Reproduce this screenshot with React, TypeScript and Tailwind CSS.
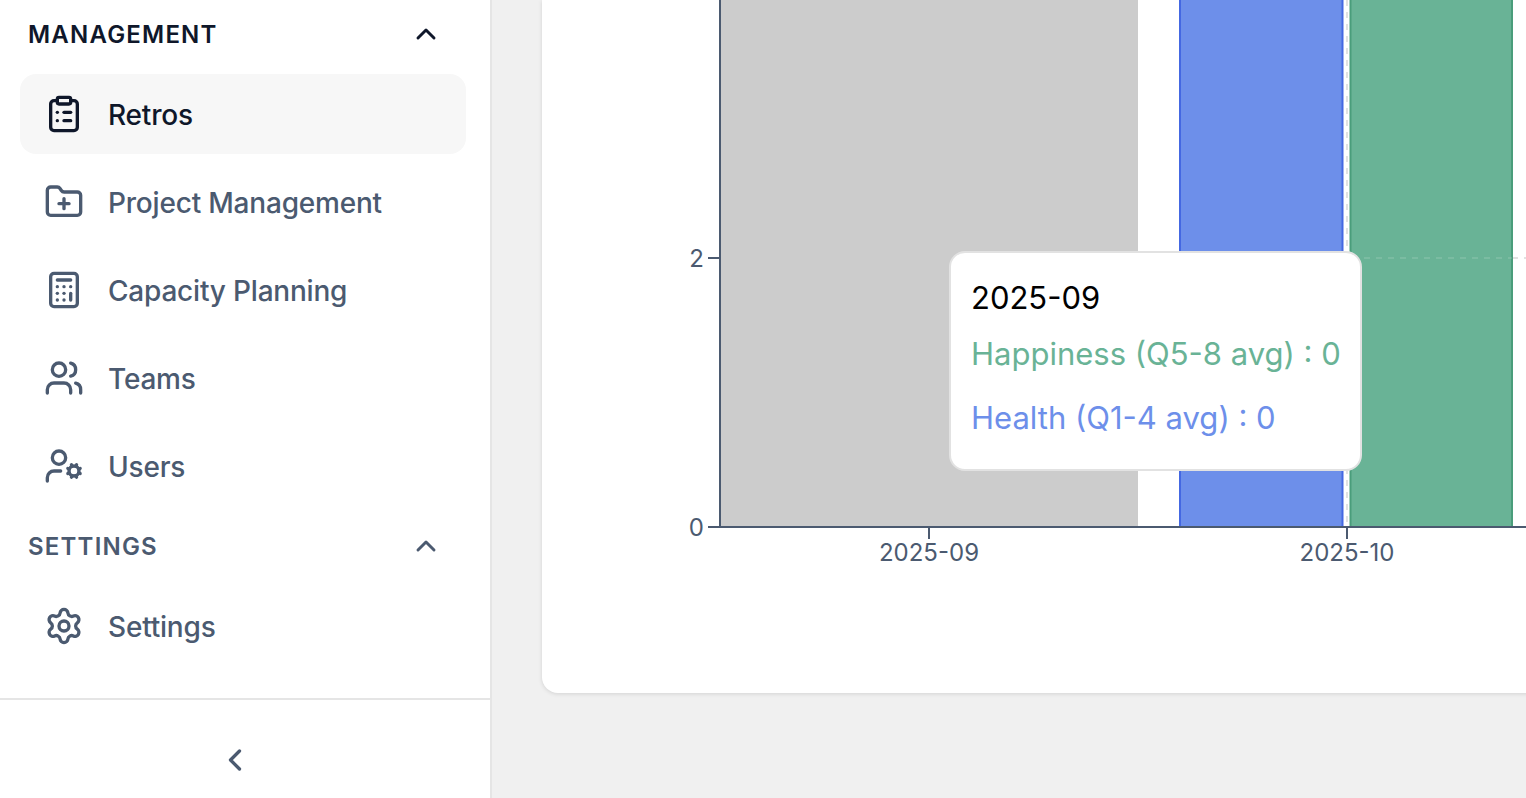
import {
  Calculator,
  ChevronLeft,
  ChevronUp,
  ClipboardList,
  FolderPlus,
  Settings,
  UserCog,
  Users,
} from "lucide-react";
import type { LucideIcon } from "lucide-react";

const FONT = "font-['Inter',sans-serif]";

type NavItem = {
  label: string;
  icon: LucideIcon;
  active?: boolean;
};

const MANAGEMENT_ITEMS: NavItem[] = [
  { label: "Retros", icon: ClipboardList, active: true },
  { label: "Project Management", icon: FolderPlus },
  { label: "Capacity Planning", icon: Calculator },
  { label: "Teams", icon: Users },
  { label: "Users", icon: UserCog },
];

function NavRow({ label, icon: Icon, active }: NavItem) {
  return (
    <a
      className={
        active
          ? "flex h-20 items-center gap-6 rounded-2xl bg-[#f7f7f7] pl-6 text-[#0f172a]"
          : "flex h-20 items-center gap-6 rounded-2xl pl-6 text-[#4b5a70]"
      }
    >
      <Icon size={40} strokeWidth={2} />
      <span className="pt-0.5 text-[28px] font-medium tracking-[-0.2px]">{label}</span>
    </a>
  );
}

function SectionHeader({ title, dark }: { title: string; dark?: boolean }) {
  return (
    <div
      className={
        dark
          ? "flex items-center justify-between pl-2 pr-6 text-[#0f172a]"
          : "flex items-center justify-between pl-2 pr-6 text-[#4b5a70]"
      }
    >
      <span className="pt-0.5 text-2xl font-semibold tracking-[1.2px]">{title}</span>
      <ChevronUp size={32} strokeWidth={2.2} />
    </div>
  );
}

function Sidebar() {
  return (
    <aside className="flex h-screen w-[492px] shrink-0 flex-col border-r-2 border-[#e5e5e5] bg-white">
      <nav className="flex-1 pl-5 pr-6">
        <div className="flex h-[68px] items-center">
          <div className="w-full">
            <SectionHeader title="MANAGEMENT" dark />
          </div>
        </div>
        <div className="mt-1.5 flex flex-col gap-2">
          {MANAGEMENT_ITEMS.map((item) => (
            <NavRow key={item.label} {...item} />
          ))}
        </div>
        <div className="flex h-20 items-center">
          <div className="w-full">
            <SectionHeader title="SETTINGS" />
          </div>
        </div>
        <NavRow label="Settings" icon={Settings} />
      </nav>
      <div className="flex h-[100px] justify-center border-t-2 border-[#e5e5e5] pt-[42px] pr-[20px] text-[#4b5a70]">
        <ChevronLeft size={36} strokeWidth={2.2} />
      </div>
    </aside>
  );
}

function Chart() {
  return (
    <svg viewBox="542 0 984 693" className="h-[693px] w-[984px]">
      <line x1={720} y1={258} x2={1526} y2={258} stroke="#e2e2e2" strokeWidth={2} strokeDasharray="6 6" />
      <line x1={1347} y1={0} x2={1347} y2={527} stroke="#e2e2e2" strokeWidth={2} strokeDasharray="6 6" />
      <rect x={721} y={0} width={417} height={527} fill="#cccccc" />
      <rect x={1180} y={-4} width={162.5} height={531} fill="#6d8fea" stroke="#4468e2" strokeWidth={2} />
      <rect x={1350.5} y={-4} width={161.5} height={531} fill="#69b396" stroke="#4a9d7b" strokeWidth={2} />
      <line x1={1352} y1={258} x2={1512} y2={258} stroke="#ffffff" strokeOpacity={0.12} strokeWidth={2} strokeDasharray="6 6" />
      <line x1={720} y1={0} x2={720} y2={528} stroke="#4b5a70" strokeWidth={2} />
      <line x1={708} y1={527} x2={1526} y2={527} stroke="#4b5a70" strokeWidth={2} />
      <line x1={708} y1={258} x2={720} y2={258} stroke="#4b5a70" strokeWidth={2} />
      <line x1={929} y1={527} x2={929} y2={539} stroke="#4b5a70" strokeWidth={2} />
      <line x1={1347} y1={527} x2={1347} y2={539} stroke="#4b5a70" strokeWidth={2} />
      <g fill="#4b5a70" fontSize={24} fontFamily="Inter, sans-serif">
        <text x={704} y={267} textAnchor="end">2</text>
        <text x={704} y={536} textAnchor="end">0</text>
        <text x={929} y={561} textAnchor="middle">2025-09</text>
        <text x={1347} y={561} textAnchor="middle">2025-10</text>
      </g>
    </svg>
  );
}

function ChartTooltip() {
  return (
    <div className="absolute top-[251px] left-[407px] h-[220px] w-[413px] rounded-2xl border-2 border-[#e2e2e2] bg-white px-5 pt-[27px] text-[31px] leading-9 whitespace-nowrap">
      <p className="text-black">2025-09</p>
      <p className="mt-5 text-[#69b396]">Happiness (Q5-8 avg) : 0</p>
      <p className="mt-7 text-[#6d8fea]">Health (Q1-4 avg) : 0</p>
    </div>
  );
}

export default function App() {
  return (
    <div className={`flex h-screen overflow-hidden bg-[#f0f0f0] ${FONT}`}>
      <Sidebar />
      <main className="min-w-0 flex-1 overflow-hidden pl-[50px]">
        <div className="relative h-[693px] w-[1100px] rounded-b-2xl bg-white shadow-[0_1px_4px_rgba(0,0,0,0.12)]">
          <Chart />
          <ChartTooltip />
        </div>
      </main>
    </div>
  );
}
